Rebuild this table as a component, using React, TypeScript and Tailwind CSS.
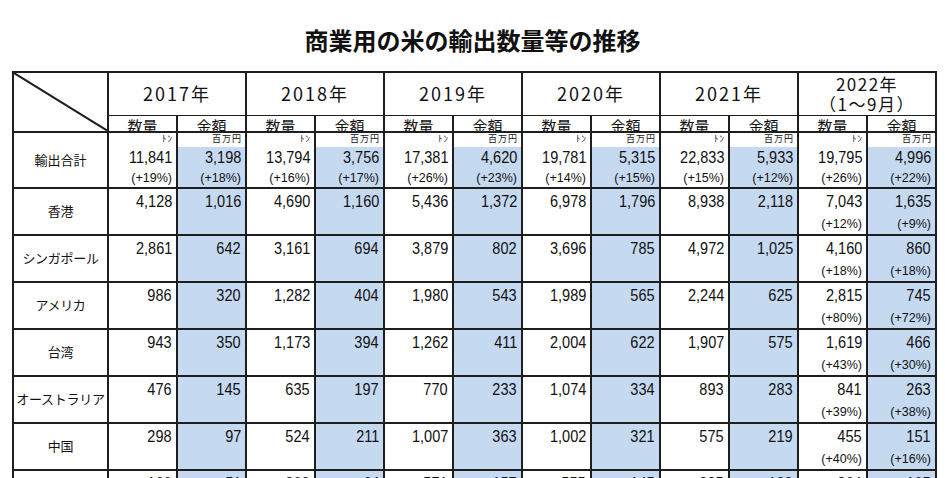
const jp = "font-['Noto_Sans_CJK_JP',sans-serif]";
const num = "font-['Liberation_Sans','Noto_Sans_CJK_JP',sans-serif]";
const line = "border-[#1e1e1e]";

type Row = { label: string; v: string[]; p?: (string | null)[] };

const total: Row = {
  label: "輸出合計",
  v: ["11,841", "3,198", "13,794", "3,756", "17,381", "4,620", "19,781", "5,315", "22,833", "5,933", "19,795", "4,996"],
  p: ["(+19%)", "(+18%)", "(+16%)", "(+17%)", "(+26%)", "(+23%)", "(+14%)", "(+15%)", "(+15%)", "(+12%)", "(+26%)", "(+22%)"],
};

const rows: Row[] = [
  { label: "香港", v: ["4,128", "1,016", "4,690", "1,160", "5,436", "1,372", "6,978", "1,796", "8,938", "2,118", "7,043", "1,635"], p: ["(+12%)", "(+9%)"] },
  { label: "シンガポール", v: ["2,861", "642", "3,161", "694", "3,879", "802", "3,696", "785", "4,972", "1,025", "4,160", "860"], p: ["(+18%)", "(+18%)"] },
  { label: "アメリカ", v: ["986", "320", "1,282", "404", "1,980", "543", "1,989", "565", "2,244", "625", "2,815", "745"], p: ["(+80%)", "(+72%)"] },
  { label: "台湾", v: ["943", "350", "1,173", "394", "1,262", "411", "2,004", "622", "1,907", "575", "1,619", "466"], p: ["(+43%)", "(+30%)"] },
  { label: "オーストラリア", v: ["476", "145", "635", "197", "770", "233", "1,074", "334", "893", "283", "841", "263"], p: ["(+39%)", "(+38%)"] },
  { label: "中国", v: ["298", "97", "524", "211", "1,007", "363", "1,002", "321", "575", "219", "455", "151"], p: ["(+40%)", "(+16%)"] },
  { label: "マカオ", v: ["160", "51", "203", "64", "571", "157", "555", "145", "385", "122", "264", "105"], p: ["(+3%)", "(+2%)"] },
];

const years = ["2017年", "2018年", "2019年", "2020年", "2021年"];

function Value({ v, p, tight }: { v: string; p?: string | null; tight?: boolean }) {
  return (
    <div className={`${num} pr-[4px] text-right ${tight ? "pt-[1px]" : "pt-[2px]"}`}>
      <div className={`${tight ? "leading-[18px]" : "leading-[20px]"} text-[16.5px]`}>
        <span className="inline-block origin-right scale-x-[0.88]">{v}</span>
      </div>
      {p && <div className={`${tight ? "mt-[3px] leading-[18px]" : "mt-[3px] leading-[20px]"} text-[12.5px]`}>{p}</div>}
    </div>
  );
}

export default function App() {
  return (
    <div className="h-[478px] w-[945px] overflow-hidden bg-white text-[#111]">
      <div className="flex h-[71px] items-center justify-center pt-[9px]">
        <h1 className={`${jp} text-[24px] font-bold leading-none`}>商業用の米の輸出数量等の推移</h1>
      </div>

      <table className={`ml-[12px] w-[923px] table-fixed border-collapse border-2 ${line}`}>
        <colgroup>
          <col className="w-[95px]" />
          {Array.from({ length: 12 }).map((_, i) => (
            <col key={i} className="w-[69px]" />
          ))}
        </colgroup>
        <thead>
          <tr className="h-[43px]">
            <th rowSpan={2} className={`relative border-2 ${line} p-0`}>
              <svg className="absolute inset-0 h-full w-full" viewBox="0 0 100 100" preserveAspectRatio="none">
                <line x1="0" y1="0" x2="100" y2="100" stroke="#1e1e1e" strokeWidth="2" vectorEffect="non-scaling-stroke" />
              </svg>
            </th>
            {years.map((y) => (
              <th key={y} colSpan={2} className={`border-2 border-b ${line} ${jp} text-[18px] font-normal tracking-[2px]`}>
                {y}
              </th>
            ))}
            <th colSpan={2} className={`border-2 border-b ${line} ${jp} text-[17px] font-normal leading-[20px] tracking-[1.5px]`}>
              <div>2022年</div>
              <div>（1〜9月）</div>
            </th>
          </tr>
          <tr className="h-[16px]">
            {Array.from({ length: 12 }).map((_, i) => (
              <th key={i} className={`border-x-2 border-t ${line} ${i % 2 ? "" : "border-r"} p-0 font-normal`}>
                <div className={`${jp} h-[15px] overflow-hidden text-[15px] leading-[19px]`}>{i % 2 ? "金額" : "数量"}</div>
              </th>
            ))}
          </tr>
        </thead>
        <tbody>
          <tr className="h-[15px]">
            <td rowSpan={2} className={`border-2 ${line} ${jp} text-center text-[13px]`}>
              {total.label}
            </td>
            {Array.from({ length: 12 }).map((_, i) => (
              <td key={i} className={`border-2 border-b-0 ${line} ${i % 2 ? "" : "border-r"} align-top`}>
                <div className={`${jp} pr-[3px] text-right text-[9px] leading-[11px] tracking-[1px]`}>{i % 2 ? "百万円" : "ﾄﾝ"}</div>
              </td>
            ))}
          </tr>
          <tr className="h-[41px]">
            {total.v.map((v, i) => (
              <td key={i} className={`border-2 border-t-0 ${line} ${i % 2 ? "bg-[#c5d9f1]" : "border-r"} align-top`}>
                <Value v={v} p={total.p?.[i]} tight />
              </td>
            ))}
          </tr>
          {rows.map((r) => (
            <tr key={r.label} className="h-[47px]">
              <td className={`border-2 ${line} ${jp} text-center text-[13px] tracking-[-0.3px]`}>{r.label}</td>
              {r.v.map((v, i) => (
                <td key={i} className={`border-2 ${line} ${i % 2 ? "bg-[#c5d9f1]" : "border-r"} align-top`}>
                  <Value v={v} p={i >= 10 ? r.p?.[i - 10] : null} />
                </td>
              ))}
            </tr>
          ))}
        </tbody>
      </table>
    </div>
  );
}
